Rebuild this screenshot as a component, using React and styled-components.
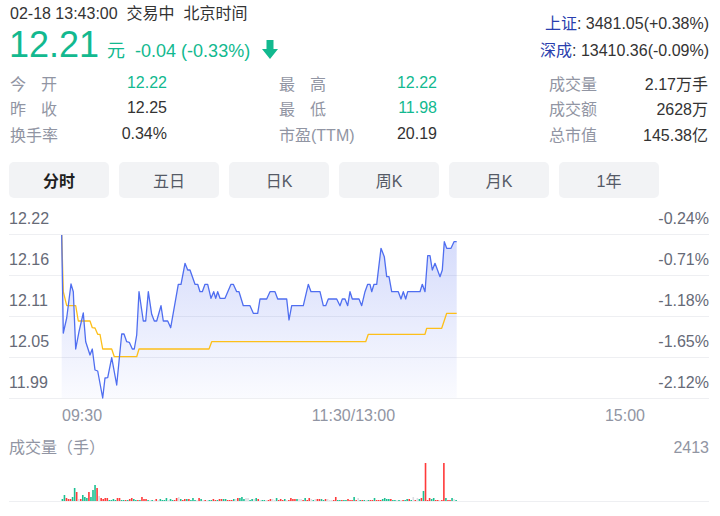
import React from 'react';
import styled, { createGlobalStyle } from 'styled-components';

const GREEN = '#12b98f';
const RED = '#ff3a3a';

const Global = createGlobalStyle`
  body {
    margin: 0;
    background: #fff;
  }
`;

const Page = styled.div`
  width: 720px;
  height: 516px;
  box-sizing: border-box;
  padding: 0 11px 0 9px;
  overflow: hidden;
  font-family: "Liberation Sans", Arial, "Noto Sans CJK SC", sans-serif;
  color: #333;
  background: #fff;
`;

const Header = styled.div`
  display: flex;
  justify-content: space-between;
  align-items: flex-start;
  height: 70px;
`;

const TimeLine = styled.div`
  font-size: 16px;
  line-height: 28px;
  padding-left: 1px;
  white-space: pre;
`;

const PriceLine = styled.div`
  display: flex;
  align-items: baseline;
  height: 32px;
  color: ${GREEN};
`;

const BigPrice = styled.span`
  font-size: 36px;
  line-height: 33px;
  margin-right: 8px;
`;

const Unit = styled.span`
  font-size: 18px;
  margin-right: 10px;
`;

const Change = styled.span`
  font-size: 18px;
  margin-right: 12px;
`;

const Arrow = styled.svg`
  align-self: flex-end;
  margin-bottom: 1px;
`;

const IndexBox = styled.div`
  padding-top: 10px;
  text-align: right;
  font-size: 16px;
  line-height: 27px;
`;

const IndexName = styled.span`
  color: #2a3fae;
`;

const StatsGrid = styled.div`
  display: grid;
  grid-template-columns: 158px 159px 160px;
  column-gap: 111px;
  grid-auto-rows: 25.5px;
`;

const StatCell = styled.div`
  display: flex;
  justify-content: space-between;
  align-items: center;
  font-size: 16px;
`;

const Label = styled.span`
  color: #9195a3;
  padding-left: 1px;
  ${p => p.$spread && `
    width: 47px;
    text-align: justify;
    text-align-last: justify;
  `}
`;

const Value = styled.span`
  color: ${p => (p.$green ? GREEN : '#333')};
`;

const Tabs = styled.div`
  display: flex;
  gap: 10px;
  margin-top: 15.5px;
`;

const Tab = styled.div`
  width: 100px;
  height: 36px;
  border-radius: 5px;
  background: #f2f3f5;
  display: flex;
  align-items: center;
  justify-content: center;
  font-size: 16px;
  color: ${p => (p.$active ? '#1f1f1f' : '#555a66')};
  font-weight: ${p => (p.$active ? 700 : 400)};
`;

const ChartArea = styled.div`
  position: relative;
`;

const GridRow = styled.div`
  box-sizing: border-box;
  height: ${p => p.$h}px;
  border-bottom: 1px solid #eeeff2;
  display: flex;
  justify-content: space-between;
  align-items: flex-end;
  padding-bottom: 6px;
  font-size: 16px;
  line-height: 18px;
  color: #666a77;
`;

const Overlay = styled.svg`
  position: absolute;
  left: 0;
  top: 0;
`;

const TimeAxis = styled.div`
  display: flex;
  justify-content: space-between;
  height: 34px;
  line-height: 34px;
  padding: 0 64px 0 53px;
  font-size: 16px;
  color: #9195a3;
`;

const VolumeHead = styled.div`
  display: flex;
  justify-content: space-between;
  height: 30px;
  line-height: 30px;
  font-size: 16px;
  color: #9195a3;
`;

const VolumeBox = styled.div`
  box-sizing: border-box;
  height: 39px;
  border-bottom: 1px solid #eeeff2;

  svg {
    display: block;
  }
`;

const price = [
  [61.7, 235], [63.3, 333], [66.7, 318], [71, 284], [73.3, 291.7], [75.7, 349], [79, 331.7], [83.3, 313],
  [85.7, 341.7], [90, 355], [92.3, 349], [95, 370], [97.7, 371], [102.7, 398], [105, 378], [107.7, 377.7],
  [111.7, 357.7], [116.7, 385], [121.7, 334], [124, 334], [126.7, 341.7], [129.3, 342.3], [132.3, 349],
  [134.3, 349], [136.7, 335], [139, 291.7], [143.3, 321], [145.7, 321], [148.3, 291.7], [151.7, 314.3],
  [154.3, 321], [156.7, 321], [161, 305.7], [163.3, 321], [167.7, 321], [170.7, 327.7], [178.3, 284.3],
  [181, 284.3], [185, 263.3], [187.7, 270], [190, 270], [195, 284.3], [197.7, 284.3], [200, 291.7],
  [202.3, 291.7], [205, 284.3], [207.7, 284.3], [211, 298.3], [213.7, 291.7], [215.7, 298.3], [217.7, 291.7],
  [220, 298.3], [225, 298.3], [231, 284.3], [233.3, 284.3], [236.7, 291.7], [239, 291.7], [243.3, 305.7],
  [250, 305.7], [253.3, 313.3], [257.7, 313.3], [260, 299], [266.7, 299], [270, 291.7], [275, 291.7],
  [277.7, 299], [286.7, 299], [289, 320], [291.7, 305.7], [303.3, 305.7], [308.3, 284.3], [311, 291.7],
  [320, 291.7], [323.3, 305.7], [325.7, 305.7], [328.3, 299], [336.7, 299], [340, 305.7], [342.3, 299],
  [345, 299], [347.7, 305.7], [350, 291.7], [352.3, 299], [359, 299], [361.7, 305.7], [365, 291.7],
  [367.7, 284.3], [370, 284.3], [371.7, 291.7], [374, 284.3], [376.7, 284.3], [381, 248.3], [384.3, 256.7],
  [386.7, 276.7], [389, 276.7], [391.7, 291.7], [398.3, 291.7], [401, 299], [403.3, 291.7], [405.7, 299],
  [407.7, 291.7], [420, 291.7], [422.3, 284.3], [425, 291.7], [427.7, 255.7], [430, 255.7], [432.3, 270],
  [435, 263.3], [440, 276.7], [442.3, 270], [444.3, 241.7], [446.7, 248.3], [451, 248.3], [454, 241.7],
  [456.7, 241.7],
];

const avg = [
  [61.7, 235], [63.3, 291.7], [66.7, 305.7], [75.7, 305.7], [78.3, 321], [90, 321], [92.3, 327.7],
  [95, 328], [97.7, 334.3], [100, 334.3], [102.7, 349], [111.7, 349], [114.3, 356.7], [136.7, 356.7],
  [139, 349], [209, 349], [211.7, 341.7], [365.7, 341.7], [368.3, 334.3], [425, 334.3], [426.7, 328.3],
  [441.7, 328.3], [446.7, 313.3], [456.7, 313.3],
];

const toPath = pts => pts.map((p, i) => `${i ? 'L' : 'M'}${p[0]} ${p[1]}`).join(' ');

// first minutes are typed in, the quiet rest is filled from a small seeded generator
const head = [
  [2, 'g'], [6, 'g'], [3, 'r'], [2, 'r'], [2, 'r'], [4, 'g'], [13, 'g'], [9, 'r'], [2, 'x'], [2, 'r'],
  [6, 'g'], [4, 'g'], [3, 'g'], [9, 'r'], [4, 'g'], [11, 'g'], [16, 'g'], [13, 'r'], [5, 'x'], [3, 'r'],
  [2, 'r'], [3, 'r'], [3, 'r'], [1, 'g'], [1, 'g'], [2, 'g'], [1, 'g'], [3, 'r'], [3, 'r'], [1, 'g'],
  [1, 'g'], [1, 'r'],
];

const makeVolumes = () => {
  let seed = 7;
  const rnd = () => {
    seed = (seed * 9301 + 49297) % 233280;
    return seed / 233280;
  };
  const list = [...head];
  for (let i = head.length; i < 194; i++) {
    const r = rnd();
    const c = r < 0.4 ? 'r' : r < 0.75 ? 'g' : 'x';
    const h = 1 + Math.round(rnd() * rnd() * 3.5);
    list.push([h, c]);
  }
  list[177] = [10, 'g'];
  list[178] = [38, 'r'];
  list[181] = [2, 'g'];
  list[182] = [3, 'g'];
  list[187] = [38, 'r'];
  list[188] = [3, 'g'];
  return list;
};

const volumes = makeVolumes();
const barColor = { r: RED, g: '#1cc092', x: '#dcdde3' };

const stats = [
  ['今开', '12.22', true, true], ['最高', '12.22', true, true], ['成交量', '2.17万手'],
  ['昨收', '12.25', false, true], ['最低', '11.98', true, true], ['成交额', '2628万'],
  ['换手率', '0.34%'], ['市盈(TTM)', '20.19'], ['总市值', '145.38亿'],
];

const tabs = ['分时', '五日', '日K', '周K', '月K', '1年'];

const levels = [
  ['12.22', '-0.24%', 37],
  ['12.16', '-0.71%', 41],
  ['12.11', '-1.18%', 41],
  ['12.05', '-1.65%', 41],
  ['11.99', '-2.12%', 41],
];

export default function App() {
  const line = toPath(price);
  const area = `${line} L456.7 398 L61.7 398 Z`;

  return (
    <Page>
      <Global />
      <Header>
        <div>
          <TimeLine>02-18 13:43:00  交易中  北京时间</TimeLine>
          <PriceLine>
            <BigPrice>12.21</BigPrice>
            <Unit>元</Unit>
            <Change>-0.04 (-0.33%)</Change>
            <Arrow width="16" height="19" viewBox="0 0 16 19">
              <path d="M4.5 0 H11.5 V9 H16 L8 19 L0 9 H4.5 Z" fill={GREEN} />
            </Arrow>
          </PriceLine>
        </div>
        <IndexBox>
          <div><IndexName>上证</IndexName>: 3481.05(+0.38%)</div>
          <div><IndexName>深成</IndexName>: 13410.36(-0.09%)</div>
        </IndexBox>
      </Header>

      <StatsGrid>
        {stats.map(([label, value, green, spread]) => (
          <StatCell key={label}>
            <Label $spread={spread}>{spread ? label.split('').join(' ') : label}</Label>
            <Value $green={green}>{value}</Value>
          </StatCell>
        ))}
      </StatsGrid>

      <Tabs>
        {tabs.map((t, i) => (
          <Tab key={t} $active={i === 0}>{t}</Tab>
        ))}
      </Tabs>

      <ChartArea>
        {levels.map(([l, r, h]) => (
          <GridRow key={l} $h={h}>
            <span>{l}</span>
            <span>{r}</span>
          </GridRow>
        ))}
        <Overlay width="700" height="201" viewBox="9 198 700 201">
          <defs>
            <linearGradient id="fillBlue" x1="0" y1="0" x2="0" y2="1">
              <stop offset="0" stopColor="#5b74f0" stopOpacity="0.26" />
              <stop offset="1" stopColor="#5b74f0" stopOpacity="0.03" />
            </linearGradient>
          </defs>
          <path d={area} fill="url(#fillBlue)" />
          <path d={toPath(avg)} fill="none" stroke="#fdbf1a" strokeWidth="1.3" strokeLinejoin="round" />
          <path d={line} fill="none" stroke="#4f6ef0" strokeWidth="1.3" strokeLinejoin="round" />
        </Overlay>
      </ChartArea>

      <TimeAxis>
        <span>09:30</span>
        <span>11:30/13:00</span>
        <span>15:00</span>
      </TimeAxis>

      <VolumeHead>
        <span>成交量（手）</span>
        <span>2413</span>
      </VolumeHead>

      <VolumeBox>
        <svg width="700" height="38" viewBox="9 463 700 38">
          {volumes.map(([h, c], i) => (
            <rect key={i} x={61.6 + i * 2.04} y={501 - h} width="1.6" height={h} fill={barColor[c]} />
          ))}
        </svg>
      </VolumeBox>
    </Page>
  );
}
